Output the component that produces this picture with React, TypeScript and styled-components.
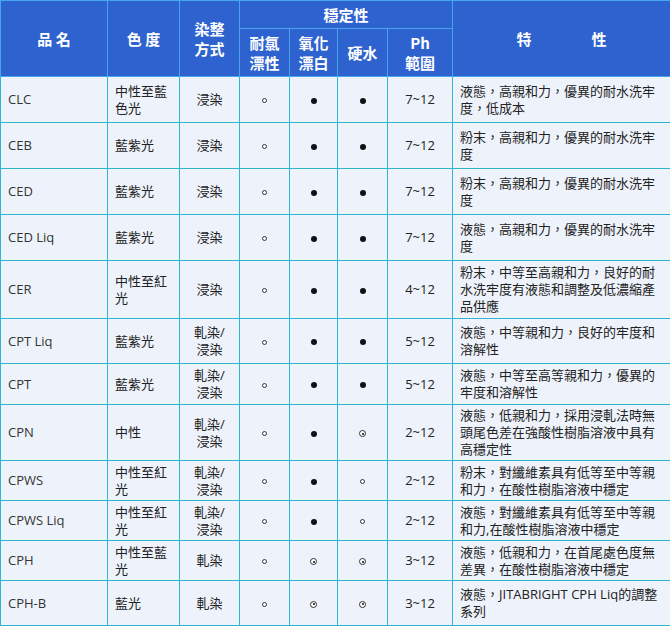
import React from "react";
import styled, { createGlobalStyle } from "styled-components";

const Global = createGlobalStyle`
  html, body { margin: 0; padding: 0; background: #ffffff; }
  body { font-family: "Open Sans", "Noto Sans CJK TC", sans-serif; }
`;

const Table = styled.table`
  width: 670px;
  border-collapse: collapse;
  table-layout: fixed;
  background: #eef3fb;
  font-family: "Open Sans", "Noto Sans CJK TC", sans-serif;
`;

const HeadRow = styled.tr<{ $h: number }>`
  height: ${(p) => p.$h}px;
`;

const HeadCell = styled.th`
  background: #2e63cf;
  color: #ffffff;
  font-family: "Noto Sans CJK TC", sans-serif;
  font-weight: 700;
  font-size: 15px;
  line-height: 20px;
  text-align: center;
  vertical-align: middle;
  padding: 0;
  border: 1px solid #45a6ee;
  white-space: pre-line;
`;

const Row = styled.tr<{ $h: number }>`
  height: ${(p) => p.$h}px;
`;

const Cell = styled.td<{ $align?: "left" | "center"; $pad?: string }>`
  border: 1px solid #2db5d2;
  color: #222222;
  font-size: 13px;
  line-height: 17px;
  text-align: ${(p) => p.$align ?? "center"};
  vertical-align: middle;
  padding: ${(p) => p.$pad ?? "0"};
  white-space: pre-line;
`;

const NameCell = styled(Cell)`
  color: #333333;
`;

const Mark = styled.span<{ $kind: "o" | "f" | "d" }>`
  display: inline-block;
  vertical-align: middle;
  box-sizing: border-box;
  border-radius: 50%;
  position: relative;
  ${(p) =>
    p.$kind === "o"
      ? `width: 5px; height: 5px; border: 1px solid #333; background: #fff;`
      : p.$kind === "f"
      ? `width: 6px; height: 6px; background: #111;`
      : `width: 7px; height: 7px; border: 1px solid #333; background: #fff;`}
  ${(p) =>
    p.$kind === "d"
      ? `&::after { content: ""; position: absolute; left: 1.5px; top: 1.5px; width: 2px; height: 2px; border-radius: 50%; background: #111; }`
      : ""}
`;

type K = "o" | "f" | "d";
type RowData = {
  name: string;
  shade: string;
  method: string;
  marks: [K, K, K];
  ph: string;
  desc: string;
  h: number;
};

const rows: RowData[] = [
  { name: "CLC", shade: "中性至藍色光", method: "浸染", marks: ["o", "f", "f"], ph: "7~12", desc: "液態，高親和力，優異的耐水洗牢度，低成本", h: 46 },
  { name: "CEB", shade: "藍紫光", method: "浸染", marks: ["o", "f", "f"], ph: "7~12", desc: "粉末，高親和力，優異的耐水洗牢度", h: 46 },
  { name: "CED", shade: "藍紫光", method: "浸染", marks: ["o", "f", "f"], ph: "7~12", desc: "粉末，高親和力，優異的耐水洗牢度", h: 46 },
  { name: "CED Liq", shade: "藍紫光", method: "浸染", marks: ["o", "f", "f"], ph: "7~12", desc: "液態，高親和力，優異的耐水洗牢度", h: 46 },
  { name: "CER", shade: "中性至紅光", method: "浸染", marks: ["o", "f", "f"], ph: "4~12", desc: "粉末，中等至高親和力，良好的耐水洗牢度有液態和調整及低濃縮產品供應", h: 58 },
  { name: "CPT Liq", shade: "藍紫光", method: "軋染/\n浸染", marks: ["o", "f", "f"], ph: "5~12", desc: "液態，中等親和力，良好的牢度和溶解性", h: 45 },
  { name: "CPT", shade: "藍紫光", method: "軋染/\n浸染", marks: ["o", "f", "f"], ph: "5~12", desc: "液態，中等至高等親和力，優異的牢度和溶解性", h: 41 },
  { name: "CPN", shade: "中性", method: "軋染/\n浸染", marks: ["o", "f", "d"], ph: "2~12", desc: "液態，低親和力，採用浸軋法時無頭尾色差在強酸性樹脂溶液中具有高穩定性", h: 56 },
  { name: "CPWS", shade: "中性至紅光", method: "軋染/\n浸染", marks: ["o", "f", "o"], ph: "2~12", desc: "粉末，對纖維素具有低等至中等親和力，在酸性樹脂溶液中穩定", h: 40 },
  { name: "CPWS Liq", shade: "中性至紅光", method: "軋染/\n浸染", marks: ["o", "f", "o"], ph: "2~12", desc: "液態，對纖維素具有低等至中等親和力,在酸性樹脂溶液中穩定", h: 40 },
  { name: "CPH", shade: "中性至藍光", method: "軋染", marks: ["o", "d", "d"], ph: "3~12", desc: "液態，低親和力，在首尾處色度無差異，在酸性樹脂溶液中穩定", h: 40 },
  { name: "CPH-B", shade: "藍光", method: "軋染", marks: ["o", "d", "d"], ph: "3~12", desc: "液態，JITABRIGHT CPH Liq的調整系列", h: 45 },
];

const widths = [107, 72, 60, 50, 48, 50, 65, 218];

export default function App() {
  return (
    <>
      <Global />
      <Table>
        <colgroup>
          {widths.map((w, i) => (
            <col key={i} style={{ width: w }} />
          ))}
        </colgroup>
        <thead>
          <HeadRow $h={28}>
            <HeadCell rowSpan={2}>品 名</HeadCell>
            <HeadCell rowSpan={2}>色 度</HeadCell>
            <HeadCell rowSpan={2}>{"染整\n方式"}</HeadCell>
            <HeadCell colSpan={4}>穩定性</HeadCell>
            <HeadCell rowSpan={2}>特　　　　性</HeadCell>
          </HeadRow>
          <HeadRow $h={48}>
            <HeadCell>{"耐氯\n漂性"}</HeadCell>
            <HeadCell>{"氧化\n漂白"}</HeadCell>
            <HeadCell>硬水</HeadCell>
            <HeadCell>{"Ph\n範圍"}</HeadCell>
          </HeadRow>
        </thead>
        <tbody>
          {rows.map((r) => (
            <Row key={r.name} $h={r.h}>
              <NameCell $align="left" $pad="0 0 0 7px">{r.name}</NameCell>
              <Cell $align="left" $pad="0 6px 0 7px">{r.shade}</Cell>
              <Cell>{r.method}</Cell>
              {r.marks.map((m, i) => (
                <Cell key={i}>
                  <Mark $kind={m} />
                </Cell>
              ))}
              <Cell>{r.ph}</Cell>
              <Cell $align="left" $pad="0 9px 0 7px">{r.desc}</Cell>
            </Row>
          ))}
        </tbody>
      </Table>
    </>
  );
}
